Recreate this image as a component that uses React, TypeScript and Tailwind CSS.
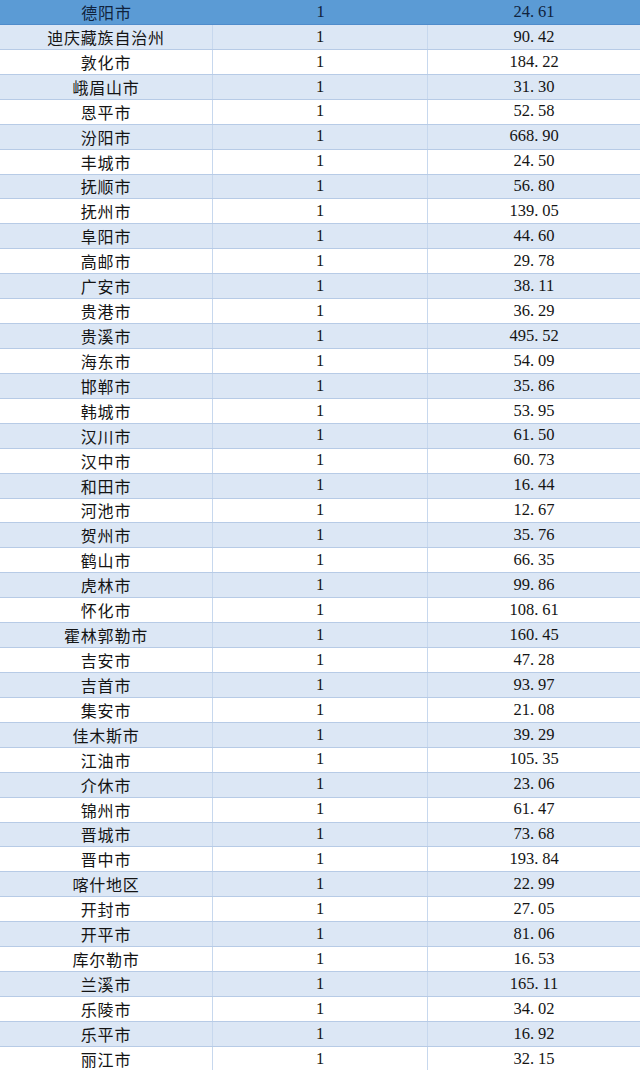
import React from "react";

const rows: [string, string, string][] = [
  ["迪庆藏族自治州", "1", "90.42"],
  ["敦化市", "1", "184.22"],
  ["峨眉山市", "1", "31.30"],
  ["恩平市", "1", "52.58"],
  ["汾阳市", "1", "668.90"],
  ["丰城市", "1", "24.50"],
  ["抚顺市", "1", "56.80"],
  ["抚州市", "1", "139.05"],
  ["阜阳市", "1", "44.60"],
  ["高邮市", "1", "29.78"],
  ["广安市", "1", "38.11"],
  ["贵港市", "1", "36.29"],
  ["贵溪市", "1", "495.52"],
  ["海东市", "1", "54.09"],
  ["邯郸市", "1", "35.86"],
  ["韩城市", "1", "53.95"],
  ["汉川市", "1", "61.50"],
  ["汉中市", "1", "60.73"],
  ["和田市", "1", "16.44"],
  ["河池市", "1", "12.67"],
  ["贺州市", "1", "35.76"],
  ["鹤山市", "1", "66.35"],
  ["虎林市", "1", "99.86"],
  ["怀化市", "1", "108.61"],
  ["霍林郭勒市", "1", "160.45"],
  ["吉安市", "1", "47.28"],
  ["吉首市", "1", "93.97"],
  ["集安市", "1", "21.08"],
  ["佳木斯市", "1", "39.29"],
  ["江油市", "1", "105.35"],
  ["介休市", "1", "23.06"],
  ["锦州市", "1", "61.47"],
  ["晋城市", "1", "73.68"],
  ["晋中市", "1", "193.84"],
  ["喀什地区", "1", "22.99"],
  ["开封市", "1", "27.05"],
  ["开平市", "1", "81.06"],
  ["库尔勒市", "1", "16.53"],
  ["兰溪市", "1", "165.11"],
  ["乐陵市", "1", "34.02"],
  ["乐平市", "1", "16.92"],
  ["丽江市", "1", "32.15"],
];

// SimSun-like number: half-width period with room after it
const Num = ({ v }: { v: string }) => {
  const [a, b] = v.split(".");
  return (
    <span className="font-['Liberation_Serif',serif] text-[16.5px]">
      {a}
      <span className="inline-block w-[8px] text-left">.</span>
      {b}
    </span>
  );
};

const cjk = "font-['Noto_Sans_CJK_SC',sans-serif] tracking-[0.8px]";

const App = () => {
  return (
    <div className="w-[640px] h-[1070px] overflow-hidden bg-white text-[16px] text-[#141414]">
      {/* header row */}
      <div className="grid grid-cols-[213px_215px_1fr] h-[25px] bg-[#5b9bd5] text-[#10233d] items-center text-center leading-none border-b border-[#4f8ccb]">
        <span className={cjk}>德阳市</span>
        <span className="font-['Liberation_Serif',serif] text-[16.5px]">1</span>
        <Num v="24.61" />
      </div>
      {rows.map(([city, n, v], i) => (
        <div
          key={city}
          className={`grid grid-cols-[213px_215px_1fr] h-[24.93px] items-center text-center leading-none border-b border-[#b7cbe6] ${
            i % 2 === 0 ? "bg-[#dce7f5]" : "bg-white"
          }`}
        >
          <span className={`${cjk} h-full flex items-center justify-center border-r border-[#c7d8ee]`}>
            {city}
          </span>
          <span className="font-['Liberation_Serif',serif] text-[16.5px] h-full flex items-center justify-center border-r border-[#c7d8ee]">
            {n}
          </span>
          <Num v={v} />
        </div>
      ))}
    </div>
  );
};

export default App;
